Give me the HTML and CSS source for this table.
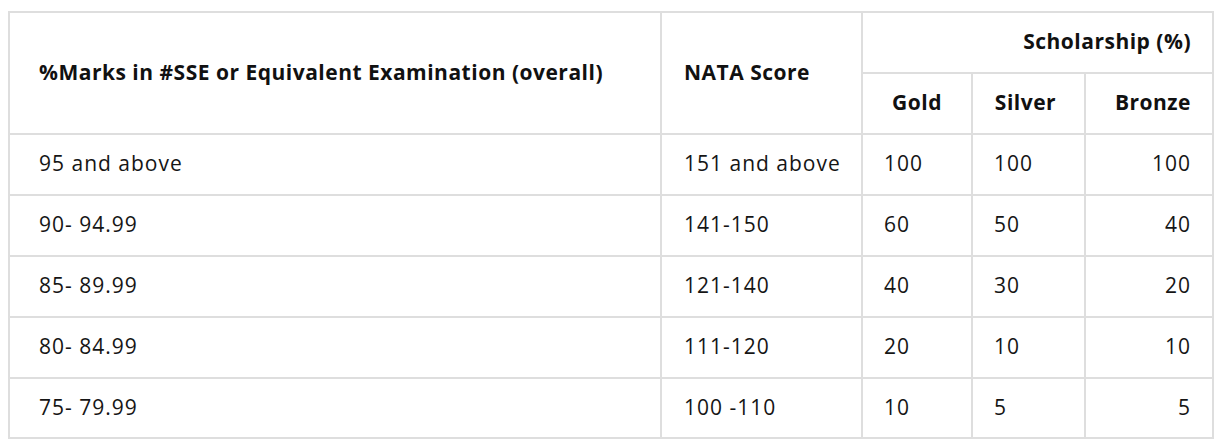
FILE: index.html
```html
<!DOCTYPE html>
<html lang="en">
<head>
<meta charset="utf-8">
<title>Scholarship</title>
<link rel="stylesheet" href="styles.css">
</head>
<body>
<table class="grid">
  <colgroup>
    <col class="c1"><col class="c2"><col class="c3"><col class="c4"><col class="c5">
  </colgroup>
  <thead>
    <tr class="row">
      <th rowspan="2" class="first">%Marks in #SSE or Equivalent Examination (overall)</th>
      <th rowspan="2" class="nata">NATA Score</th>
      <th colspan="3" class="right">Scholarship (%)</th>
    </tr>
    <tr class="row">
      <th class="center">Gold</th>
      <th class="center silver">Silver</th>
      <th class="right">Bronze</th>
    </tr>
  </thead>
  <tbody>
    <tr class="row"><td class="first">95 and above</td><td class="nata">151 and above</td><td class="num">100</td><td class="num">100</td><td class="right">100</td></tr>
    <tr class="row"><td class="first">90- 94.99</td><td class="nata">141-150</td><td class="num">60</td><td class="num">50</td><td class="right">40</td></tr>
    <tr class="row"><td class="first">85- 89.99</td><td class="nata">121-140</td><td class="num">40</td><td class="num">30</td><td class="right">20</td></tr>
    <tr class="row"><td class="first">80- 84.99</td><td class="nata">111-120</td><td class="num">20</td><td class="num">10</td><td class="right">10</td></tr>
    <tr class="row last"><td class="first">75- 79.99</td><td class="nata">100 -110</td><td class="num">10</td><td class="num">5</td><td class="right">5</td></tr>
  </tbody>
</table>
</body>
</html>
```
FILE: styles.css
```css
html, body {
  margin: 0;
  padding: 0;
  background: #ffffff;
}
body {
  font-family: "Open Sans", "Liberation Sans", sans-serif;
  color: #151515;
}
.grid {
  margin: 11px 0 0 8px;
  border-collapse: separate;
  border-spacing: 0;
  table-layout: fixed;
  width: 1206px;
  border-top: 2px solid #dedede;
  border-left: 2px solid #dedede;
}
.c1 { width: 652px; }
.c2 { width: 201px; }
.c3 { width: 110px; }
.c4 { width: 113px; }
.c5 { width: 128px; }
.grid th, .grid td {
  box-sizing: border-box;
  height: 61px;
  padding: 0 21px 3px;
  border-right: 2px solid #dedede;
  border-bottom: 2px solid #dedede;
  vertical-align: middle;
  text-align: left;
  white-space: nowrap;
}
.grid .last td { height: 60px; }
.grid th {
  font-weight: 700;
  font-size: 21px;
  letter-spacing: 0.5px;
  color: #111;
}
.grid td {
  font-weight: 400;
  font-size: 21px;
  letter-spacing: 1px;
}
.grid .first { padding-left: 29px; }
.grid .nata { padding-left: 22px; }
.grid .center { text-align: center; padding-left: 8px; padding-right: 8px; }
.grid .silver { padding-right: 14px; }
.grid .right { text-align: right; padding-right: 21px; }
```
